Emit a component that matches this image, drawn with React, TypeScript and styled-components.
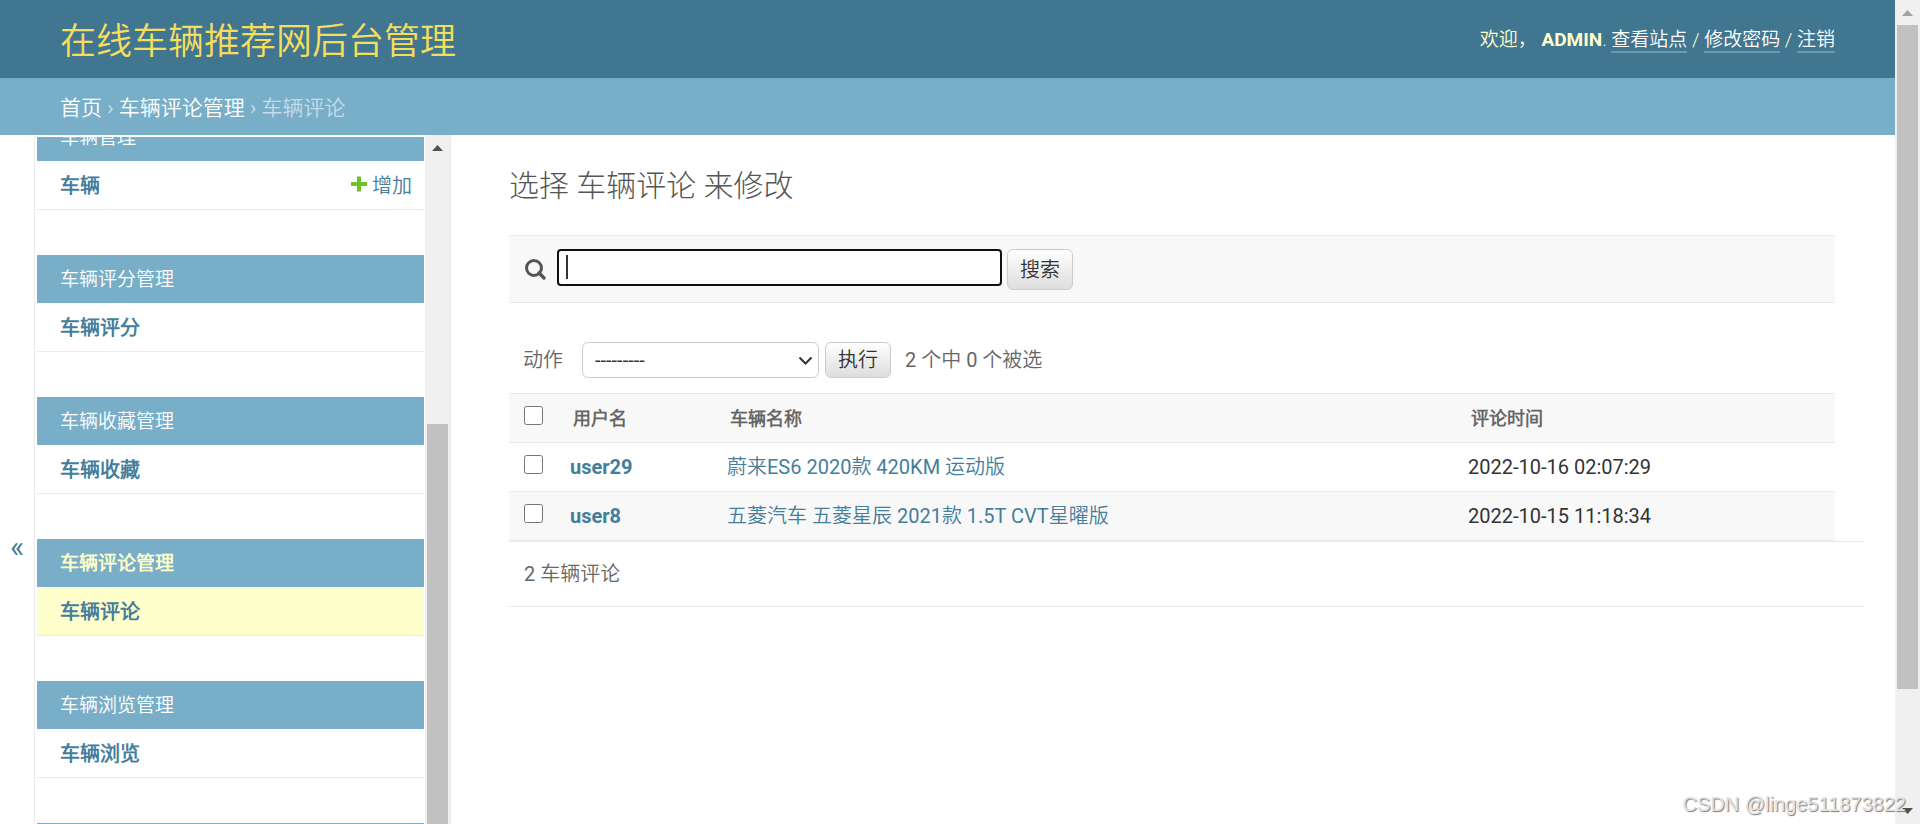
import React, { useLayoutEffect, useRef } from "react";
import styled, { createGlobalStyle } from "styled-components";

const GlobalStyle = createGlobalStyle`
  * { box-sizing: border-box; }
  body {
    margin: 0;
    background: #fff;
    color: #333;
    font: 20px/24px Roboto, "Noto Sans CJK SC DemiLight", "Noto Sans CJK SC", sans-serif;
  }
  a { color: #447e9b; text-decoration: none; }
  button, input, select { font: inherit; margin: 0; }
`;

const lightFont = `Roboto, "Noto Sans CJK SC", sans-serif`;

const Window = styled.div`
  position: relative;
  display: flex;
  height: 100vh;
  overflow: hidden;
`;

const Page = styled.div`
  flex: 1;
  min-width: 0;
  display: flex;
  flex-direction: column;
`;

const Header = styled.header`
  flex: none;
  display: flex;
  justify-content: space-between;
  align-items: center;
  height: 78px;
  padding: 0 60px;
  background: #417690;
  color: #ffc;
`;

const SiteName = styled.h1`
  margin: 0;
  padding-top: 6px;
  font-size: 36px;
  line-height: 44px;
  font-weight: 300;
  a { color: #f5dd5d; }
`;

const UserTools = styled.div`
  padding-top: 1px;
  font-size: 19px;
  font-weight: 300;
  strong { font-weight: 700; text-transform: uppercase; }
  a { color: #fff; border-bottom: 2px solid rgba(255, 255, 255, 0.25); }
`;

const Breadcrumbs = styled.nav`
  flex: none;
  height: 57px;
  padding: 18px 60px 15px;
  background: #79aec8;
  color: #c4dce8;
  font-size: 21px;
  a { color: #fff; }
`;

const Main = styled.div`
  flex: 1;
  min-height: 0;
  display: flex;
  align-items: flex-start;
  overflow: hidden;
`;

const NavToggle = styled.button`
  flex: none;
  width: 35px;
  height: 100vh;
  padding: 0;
  border: 0;
  border-right: 1px solid #eaeaea;
  background: #fff;
  color: #447e9b;
  font-size: 30px;
`;

const Sidebar = styled.nav`
  flex: none;
  align-self: stretch;
  display: flex;
  width: 416px;
  border-right: 1px solid #eaeaea;
`;

const ModuleList = styled.div`
  flex: 1;
  overflow: hidden;
  margin: 2px 1px 0 2px;
`;

const Module = styled.section`
  margin-bottom: 45px;
`;

const ModuleTitle = styled.h2<{ $current?: boolean }>`
  margin: 0;
  padding: 13px 23px 11px;
  background: #79aec8;
  font-size: 19px;
  line-height: 24px;
  font-weight: ${(p) => (p.$current ? 700 : 400)};
  a { color: ${(p) => (p.$current ? "#ffc" : "#fff")}; }
`;

const NextModule = styled.div`
  height: 48px;
  background: #79aec8;
`;

const ModelRow = styled.div<{ $current?: boolean }>`
  display: flex;
  justify-content: space-between;
  padding: 13px 12px 11px 23px;
  border-bottom: 1px solid #eaeaea;
  background: ${(p) => (p.$current ? "#ffc" : "#fff")};
`;

const ModelLink = styled.a`
  font-weight: 700;
`;

const AddLink = styled.a`
  display: flex;
  gap: 5px;
  svg { margin-top: 2px; }
`;

const Track = styled.div`
  flex: none;
  display: flex;
  flex-direction: column;
  width: 25px;
  padding: 0 2px;
  background: #f0f0f0;
`;

const TrackArrow = styled.svg`
  flex: none;
  display: block;
  width: 21px;
  height: 25px;
`;

const Lead = styled.div<{ $grow: number }>`
  flex: ${(p) => p.$grow} 0 0;
`;

const Thumb = styled.div<{ $grow: number }>`
  flex: ${(p) => p.$grow} 0 0;
  background: #c1c1c1;
`;

const Content = styled.main`
  flex: 1;
  min-width: 0;
  padding: 29px 60px 0 58px;
`;

const Title = styled.h2`
  margin: 0 0 28px;
  font-family: ${lightFont};
  font-size: 30px;
  line-height: 43px;
  font-weight: 300;
  color: #555;
`;

const SearchBar = styled.form`
  display: flex;
  align-items: flex-start;
  height: 68px;
  padding: 13px 15px;
  border-top: 1px solid #eaeaea;
  border-bottom: 1px solid #eaeaea;
  background: #f8f8f8;
`;

const SearchLabel = styled.label`
  display: flex;
  padding: 10px 10px 0 1px;
`;

const SearchField = styled.span`
  position: relative;
  display: flex;
  margin-right: 5px;
`;

const SearchInput = styled.input`
  width: 445px;
  height: 37px;
  padding: 4px 8px;
  border: 2px solid #101010;
  border-radius: 4px;
  outline: 0;
  background: #fff;
  color: #333;
  caret-color: transparent;
`;

const Caret = styled.span`
  position: absolute;
  left: 9px;
  top: 6px;
  width: 2px;
  height: 24px;
  background: #333;
  pointer-events: none;
`;

const PushButton = styled.button<{ $tall?: boolean }>`
  width: 66px;
  height: ${(p) => (p.$tall ? 41 : 36)}px;
  padding: 0;
  border: 1px solid #ccc;
  border-radius: 6px;
  background: linear-gradient(#fff, #ddd);
  color: #333;
`;

const Actions = styled.form`
  display: flex;
  align-items: center;
  padding: 39px 14px 15px;
  color: #666;
`;

const ActionSelect = styled.span`
  display: flex;
  position: relative;
  margin: 0 6px 0 19px;
  select {
    appearance: none;
    width: 237px;
    height: 36px;
    padding: 0 12px;
    border: 1px solid #ccc;
    border-radius: 6px;
    background: #fff;
    color: #333;
  }
  svg {
    position: absolute;
    right: 6px;
    top: 14px;
    pointer-events: none;
  }
`;

const Counter = styled.span`
  margin-left: 14px;
`;

const Results = styled.table`
  width: 100%;
  table-layout: fixed;
  border-collapse: separate;
  border-spacing: 0;
`;

const Column = styled.col<{ $width?: string }>`
  width: ${(p) => p.$width ?? "auto"};
`;

const HeadCell = styled.th`
  padding: 13px 15px 11px;
  border-top: 1px solid #eaeaea;
  border-bottom: 1px solid #eaeaea;
  background: #f8f8f8;
  color: #666;
  font-size: 18px;
  line-height: 24px;
  text-align: left;
`;

const BodyRow = styled.tr`
  &:nth-child(even) { background: #f8f8f8; }
`;

const Cell = styled.td`
  padding: 12px;
  border-bottom: 1px solid #eaeaea;
  text-align: left;
`;

const UserCell = styled.th`
  padding: 12px;
  border-bottom: 1px solid #eaeaea;
  text-align: left;
`;

const Check = styled.input`
  display: block;
  width: 19px;
  height: 19px;
`;

const CheckCell = styled(Cell)`
  padding: 12px 15px;
  vertical-align: top;
`;

const CheckHead = styled.td`
  padding: 12px 15px;
  border-top: 1px solid #eaeaea;
  border-bottom: 1px solid #eaeaea;
  background: #f8f8f8;
  vertical-align: top;
`;

const Paginator = styled.p`
  margin: 0 -30px 0 0;
  padding: 20px 15px;
  border-top: 1px solid #eaeaea;
  border-bottom: 1px solid #eaeaea;
  color: #666;
`;

const Watermark = styled.div`
  position: absolute;
  right: 14px;
  bottom: 8px;
  color: #e4e4e4;
  font: 20px/24px "Liberation Sans", sans-serif;
  text-shadow: 1px 1px 1px #777;
`;

const modules = [
  { title: "车辆管理", model: "车辆", add: true },
  { title: "车辆评分管理", model: "车辆评分" },
  { title: "车辆收藏管理", model: "车辆收藏" },
  { title: "车辆评论管理", model: "车辆评论", current: true },
  { title: "车辆浏览管理", model: "车辆浏览" },
];

const comments = [
  { user: "user29", car: "蔚来ES6 2020款 420KM 运动版", time: "2022-10-16 02:07:29" },
  { user: "user8", car: "五菱汽车 五菱星辰 2021款 1.5T CVT星曜版", time: "2022-10-15 11:18:34" },
];

function Arrow({ down, color }: { down?: boolean; color: string }) {
  return (
    <TrackArrow viewBox="0 0 21 25" aria-hidden="true">
      <path d={down ? "M5 9h11l-5.500 6z" : "M5 16h11l-5.500-6z"} fill={color} />
    </TrackArrow>
  );
}

export default function App() {
  const list = useRef<HTMLDivElement>(null);

  // The module list opens scrolled part of the way past its first caption.
  useLayoutEffect(() => {
    if (list.current) list.current.scrollTop = 24;
  }, []);

  return (
    <>
      <GlobalStyle />
      <Window>
        <Page>
          <Header>
            <SiteName><a href="#">在线车辆推荐网后台管理</a></SiteName>
            <UserTools>
              欢迎， <strong>admin</strong>. <a href="#">查看站点</a> / <a href="#">修改密码</a> / <a href="#">注销</a>
            </UserTools>
          </Header>
          <Breadcrumbs>
            <a href="#">首页</a> › <a href="#">车辆评论管理</a> › 车辆评论
          </Breadcrumbs>
          <Main>
            <NavToggle type="button">«</NavToggle>
            <Sidebar>
              <ModuleList ref={list}>
                {modules.map((m) => (
                  <Module key={m.title}>
                    <ModuleTitle $current={m.current}><a href="#">{m.title}</a></ModuleTitle>
                    <ModelRow $current={m.current}>
                      <ModelLink href="#">{m.model}</ModelLink>
                      {m.add && (
                        <AddLink href="#">
                          <svg width="16" height="16" viewBox="0 0 16 16" aria-hidden="true">
                            <path d="M6 0.500h4v5.500h6v4h-6v5.500h-4v-5.500h-6v-4h6z" fill="#70bf2b" />
                          </svg>
                          增加
                        </AddLink>
                      )}
                    </ModelRow>
                  </Module>
                ))}
                <NextModule />
              </ModuleList>
              <Track>
                <Arrow color="#505050" />
                <Lead $grow={264} />
                <Thumb $grow={400} />
              </Track>
            </Sidebar>
            <Content>
              <Title>选择 车辆评论 来修改</Title>
              <SearchBar>
                <SearchLabel htmlFor="searchbar" aria-label="搜索">
                  <svg width="22" height="22" viewBox="0 0 22 22" fill="none" stroke="#555" aria-hidden="true">
                    <circle cx="9" cy="9" r="7.500" strokeWidth="3" />
                    <path d="M14 14l5 5" strokeWidth="3.500" strokeLinecap="round" />
                  </svg>
                </SearchLabel>
                <SearchField>
                  <SearchInput id="searchbar" type="text" autoFocus />
                  <Caret />
                </SearchField>
                <PushButton $tall type="button">搜索</PushButton>
              </SearchBar>
              <Actions>
                <label htmlFor="action">动作</label>
                <ActionSelect>
                  <select id="action"><option>---------</option></select>
                  <svg width="15" height="10" viewBox="0 0 15 10" fill="none" stroke="#333" strokeWidth="2" aria-hidden="true">
                    <path d="M1.500 1.500l6 6 6-6" />
                  </svg>
                </ActionSelect>
                <PushButton type="button">执行</PushButton>
                <Counter>2 个中 0 个被选</Counter>
              </Actions>
              <Results>
                <colgroup>
                  <Column $width="49px" />
                  <Column $width="157px" />
                  <Column />
                  <Column $width="379px" />
                </colgroup>
                <thead>
                  <tr>
                    <CheckHead><Check type="checkbox" aria-label="全选" /></CheckHead>
                    <HeadCell scope="col">用户名</HeadCell>
                    <HeadCell scope="col">车辆名称</HeadCell>
                    <HeadCell scope="col">评论时间</HeadCell>
                  </tr>
                </thead>
                <tbody>
                  {comments.map((c) => (
                    <BodyRow key={c.user}>
                      <CheckCell><Check type="checkbox" aria-label={c.user} /></CheckCell>
                      <UserCell scope="row"><a href="#">{c.user}</a></UserCell>
                      <Cell><a href="#">{c.car}</a></Cell>
                      <Cell>{c.time}</Cell>
                    </BodyRow>
                  ))}
                </tbody>
              </Results>
              <Paginator>2 车辆评论</Paginator>
            </Content>
          </Main>
        </Page>
        <Track>
          <Arrow color="#a3a3a3" />
          <Thumb $grow={664} />
          <Lead $grow={110} />
          <Arrow down color="#505050" />
        </Track>
        <Watermark>CSDN @linge511873822</Watermark>
      </Window>
    </>
  );
}
